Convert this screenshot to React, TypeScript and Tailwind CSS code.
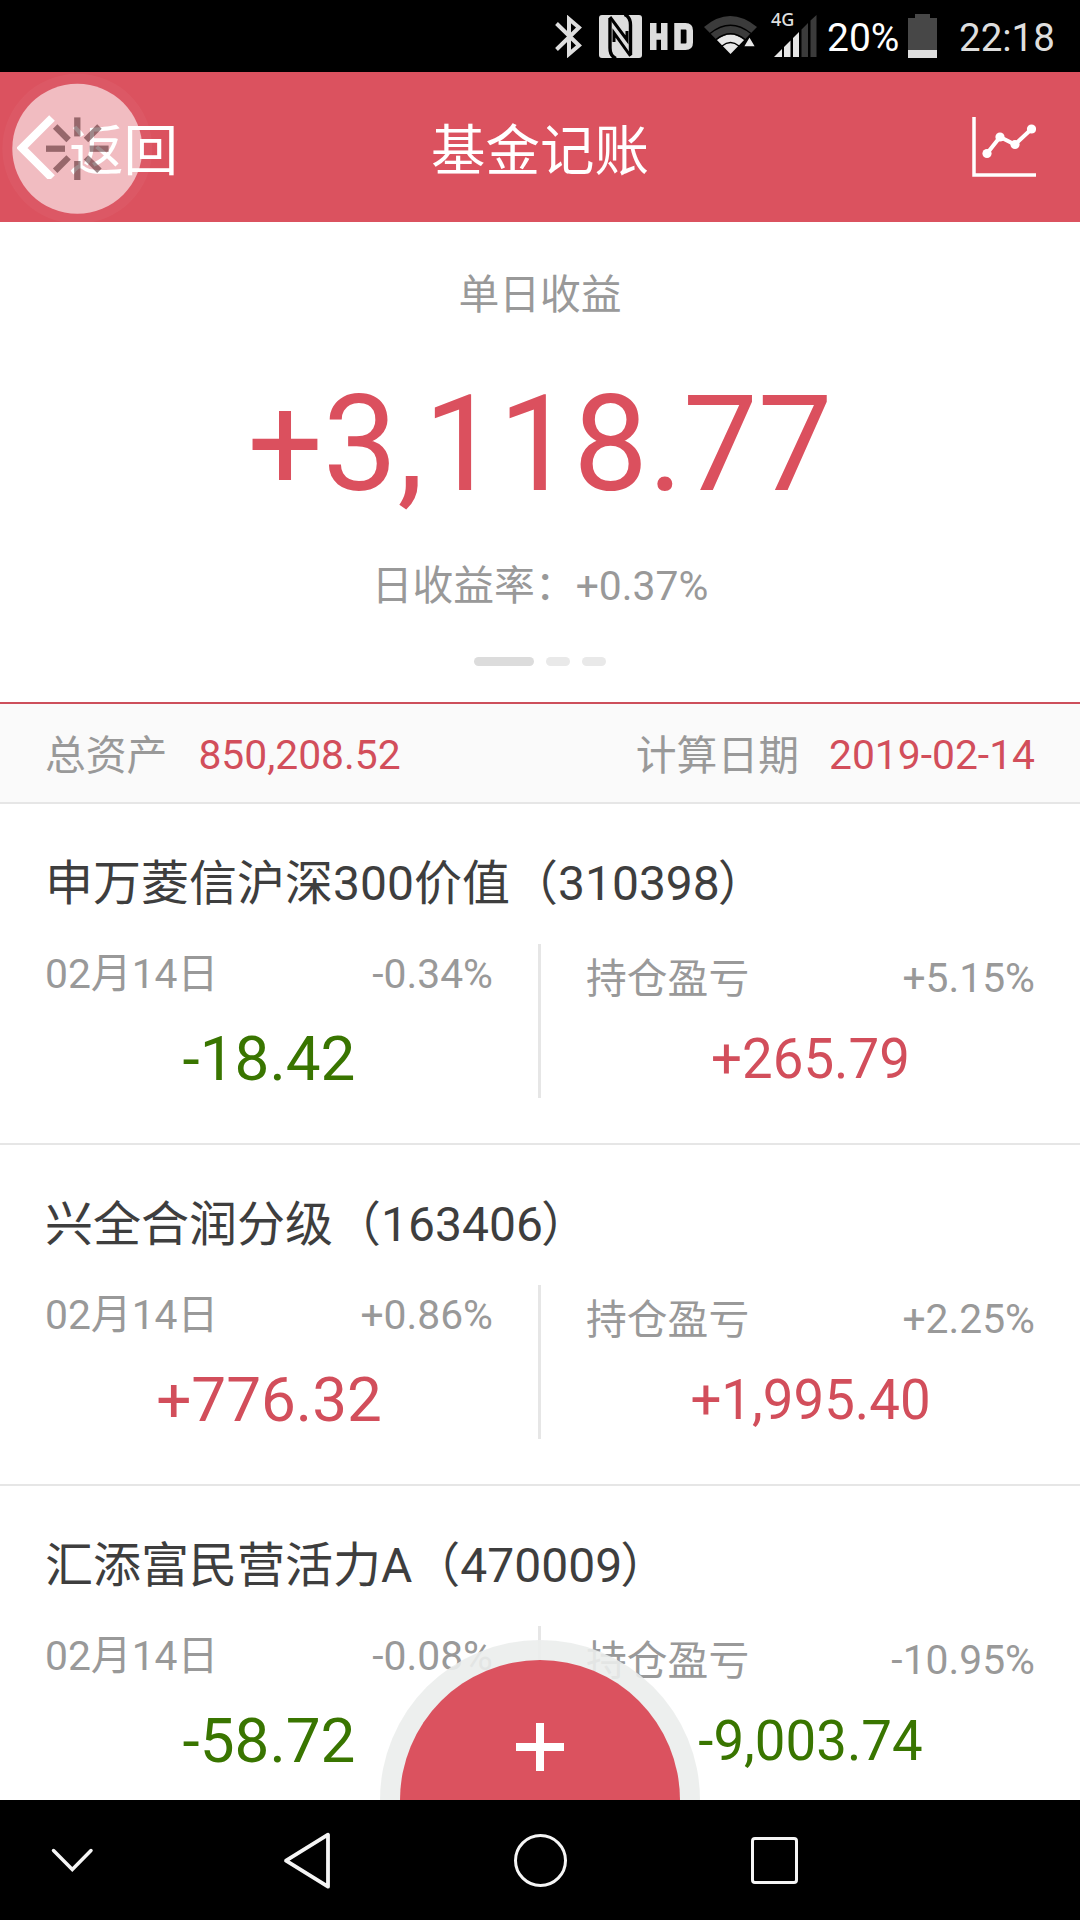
type Tone = "up" | "down";

type Fund = {
  name: string;
  code: string;
  date: string;
  dayRate: string;
  dayProfit: string;
  dayTone: Tone;
  totalRate: string;
  totalProfit: string;
  totalTone: Tone;
};

const funds: Fund[] = [
  {
    name: "申万菱信沪深300价值",
    code: "310398",
    date: "02月14日",
    dayRate: "-0.34%",
    dayProfit: "-18.42",
    dayTone: "down",
    totalRate: "+5.15%",
    totalProfit: "+265.79",
    totalTone: "up",
  },
  {
    name: "兴全合润分级",
    code: "163406",
    date: "02月14日",
    dayRate: "+0.86%",
    dayProfit: "+776.32",
    dayTone: "up",
    totalRate: "+2.25%",
    totalProfit: "+1,995.40",
    totalTone: "up",
  },
  {
    name: "汇添富民营活力A",
    code: "470009",
    date: "02月14日",
    dayRate: "-0.08%",
    dayProfit: "-58.72",
    dayTone: "down",
    totalRate: "-10.95%",
    totalProfit: "-9,003.74",
    totalTone: "down",
  },
];

const toneClass: Record<Tone, string> = {
  up: "text-[#d24e5b]",
  down: "text-[#397500]",
};

function StatusBar() {
  return (
    <div className="flex h-[72px] shrink-0 items-start bg-black pl-[555px] text-[#dedede]">
      <svg className="mt-[15px] h-[43px] w-[27px]" viewBox="0 0 27 43" fill="none" stroke="#dedede" strokeWidth="4">
        <path d="M1.500 8.500 L24 30.500 L14 39 V4 L24 12.500 L1.500 34.500" />
      </svg>
      <svg className="mt-[15px] ml-[17px] h-[43px] w-[43px]" viewBox="0 0 43 43">
        <rect width="43" height="43" rx="3" fill="#dedede" />
        <g fill="none" stroke="#000" strokeWidth="3.400">
          <path d="M11 3 V33 Q11 41 17 43.500" />
          <path d="M31.500 40 V10 Q31.500 2 25.500 -0.500" />
          <path d="M11 2 L28 25 V16" strokeWidth="3" />
          <path d="M31.500 41 L15 18 V27" strokeWidth="3" />
        </g>
      </svg>
      <svg className="mt-[23px] ml-[8px] h-[27px] w-[44px]" viewBox="0 0 44 27" fill="none" stroke="#dedede" strokeWidth="6.500">
        <path d="M3.250 0 V27 M14.250 0 V27 M3.250 13.500 H14.250" />
        <path d="M27.500 3.250 H35.500 Q39.750 3.250 39.750 7.500 V19.500 Q39.750 23.750 35.500 23.750 H27.500 Z" />
      </svg>
      <svg className="mt-[16px] ml-[10px] h-[38px] w-[54px]" viewBox="0 0 54 38">
        <path d="M0 11 Q26 -11 53 11 L26.500 38 Z" fill="#3b3b3b" />
        <path d="M13 24 Q26.500 13 40 24 L26.500 38 Z" fill="#e6e6e6" />
        <path d="M6 17.500 Q26.500 1 47 17.500 M12 23.500 Q26.500 12 41 23.500 M18 30 Q26.500 23 35 30" fill="none" stroke="#000" strokeWidth="1.500" />
        <path d="M45.500 20 L52 31 H39 Z" fill="#e6e6e6" stroke="#000" strokeWidth="1.500" />
      </svg>
      <div className="relative mt-[15px] ml-[16px] h-[43px] w-[43px]">
        <svg className="h-[43px] w-[43px]" viewBox="0 0 43 43">
          <path d="M0 42 L8 34 V42 Z M10 32 L16.500 25.500 V42 H10 Z M19 23 L25 17 V42 H19 Z" fill="#e6e6e6" />
          <path d="M27.500 14.500 L34 8 V42 H27.500 Z M36.500 5.500 L42.500 0 V42 H36.500 Z" fill="#3b3b3b" />
        </svg>
        <span className="absolute top-[-5px] left-[-3px] font-['Noto_Sans'] text-[18px] leading-[18px] font-medium">4G</span>
      </div>
      <span className="ml-[10px] w-[72px] text-[39px] leading-[76px] whitespace-nowrap text-white">20%</span>
      <svg className="mt-[14px] ml-[9px] h-[44px] w-[29px]" viewBox="0 0 29 44">
        <path d="M7 0 H22 V4 H29 V36 H0 V4 H7 Z" fill="#474747" />
        <path d="M0 36 H29 V44 H0 Z" fill="#dedede" />
      </svg>
      <span className="ml-[22px] text-[38.5px] leading-[76px]">22:18</span>
    </div>
  );
}

// floating assistive ball that sits on top of the back button
function FloatingBall() {
  return (
    <svg className="absolute top-0 left-0 h-[156px] w-[160px]" viewBox="0 0 160 156">
      <circle cx="77.300" cy="76.700" r="75" fill="#fff" fillOpacity="0.04" />
      <circle cx="77.300" cy="76.700" r="65" fill="#fff" fillOpacity="0.6" />
      <g stroke="#3e1216" strokeOpacity="0.5" strokeWidth="6.300">
        {[0, 45, 90, 135, 180, 225, 270, 315].map((deg) => (
          <path key={deg} d="M77.300 64.400 V45.400" transform={`rotate(${deg} 77.300 76.700)`} />
        ))}
      </g>
    </svg>
  );
}

function Header() {
  return (
    <header className="relative grid h-[150px] shrink-0 grid-cols-3 items-center bg-[#db525f] text-[54.5px] leading-[60px] text-white">
      <div className="flex items-center pl-[17px]">
        <svg className="h-[64px] w-[38px]" viewBox="0 0 38 64" fill="none" stroke="#fff" strokeWidth="8">
          <path d="M35 3 L5 33 L35 63" />
        </svg>
        <span className="mt-[8px] ml-[14px]">返回</span>
      </div>
      <h1 className="mt-[8px] text-center">基金记账</h1>
      <svg className="mr-[44px] h-[61px] w-[64px] justify-self-end" viewBox="0 0 64 61" fill="none" stroke="#fff" strokeWidth="3.500">
        <path d="M2 0 V58 H64" />
        <path d="M15 36.500 L28 20 L43 27.500 L59.500 12" strokeWidth="4" />
        <g fill="#fff" stroke="none">
          <circle cx="15" cy="36.500" r="4.600" />
          <circle cx="28" cy="20" r="4.600" />
          <circle cx="43" cy="27.500" r="4.600" />
          <circle cx="59.500" cy="12" r="4.600" />
        </g>
      </svg>
      <FloatingBall />
    </header>
  );
}

function Summary() {
  return (
    <section className="flex h-[482px] shrink-0 flex-col items-center border-b-2 border-[#cd4f5b] text-[40.8px] text-[#999]">
      <p className="mt-[43px] leading-[60px]">单日收益</p>
      <p className="mt-[40px] text-[133px] leading-[160px] text-[#db505e]">+3,118.77</p>
      <p className="mt-[31px] leading-[60px]">日收益率：+0.37%</p>
      <div className="mt-[41px] flex gap-3">
        <span className="h-[9px] w-[60px] rounded-full bg-[#dcdcdc]" />
        <span className="h-[9px] w-6 rounded-full bg-[#e9e9e9]" />
        <span className="h-[9px] w-6 rounded-full bg-[#e9e9e9]" />
      </div>
    </section>
  );
}

function AssetBar() {
  return (
    <div className="flex h-[100px] shrink-0 justify-between border-b-2 border-[#e6e6e6] bg-[#fafafa] px-[45px] text-[40.8px] leading-[102px] text-[#999]">
      <p className="flex gap-[31px]">
        <span className="pt-px">总资产</span>
        <span className="text-[#d24e5b]">850,208.52</span>
      </p>
      <p className="flex gap-[30px]">
        <span className="pt-px">计算日期</span>
        <span className="text-[#d24e5b]">2019-02-14</span>
      </p>
    </div>
  );
}

function FundCard({ fund }: { fund: Fund }) {
  return (
    <article className="h-[341px] shrink-0 border-b-2 border-[#e6e6e6] px-[45px] pt-[50px]">
      <h2 className="text-[48px] leading-[60px] text-[#3e3e3e]">
        {fund.name}（{fund.code}
        <span className="-ml-[2px]">）</span>
      </h2>
      <div className="mt-[30px] flex h-[154px]">
        <div className="w-[493px] pr-[45px]">
          <div className="flex justify-between text-[40.8px] leading-[60px] text-[#999]">
            <span>{fund.date}</span>
            <span>{fund.dayRate}</span>
          </div>
          <p className={`mt-[15px] text-center text-[62px] leading-[80px] ${toneClass[fund.dayTone]}`}>
            {fund.dayProfit}
          </p>
        </div>
        <div className="w-[3px] bg-[#e6e6e6]" />
        <div className="flex-1 pt-[4px] pl-[45px]">
          <div className="flex justify-between text-[40.8px] leading-[60px] text-[#999]">
            <span className="pt-px">持仓盈亏</span>
            <span>{fund.totalRate}</span>
          </div>
          <p className={`mt-[10px] text-center text-[54.6px] leading-[80px] ${toneClass[fund.totalTone]}`}>
            {fund.totalProfit}
          </p>
        </div>
      </div>
    </article>
  );
}

function AddButton() {
  return (
    <button className="absolute bottom-0 left-[380px] h-[160px] w-[320px] rounded-t-full bg-[#ebedec]/90 px-5 pt-5">
      <span className="flex h-[140px] w-[280px] justify-center rounded-t-full bg-[#db525f] pt-[63px]">
        <svg className="h-[48px] w-[48px]" viewBox="0 0 48 48" stroke="#fff" strokeWidth="8">
          <path d="M24 0 V48 M0 24 H48" />
        </svg>
      </span>
    </button>
  );
}

function NavBar() {
  return (
    <nav className="flex h-[120px] shrink-0 items-center bg-black">
      <div className="mr-[46px] flex w-[144px] justify-center">
        <svg className="h-[60px] w-[60px]" viewBox="0 0 60 60" fill="none" stroke="#f5f5f5" strokeWidth="3.500" strokeLinecap="round">
          <path d="M11.500 20.500 L30.300 39.500 L49 20.500" />
        </svg>
      </div>
      <div className="flex w-[234px] justify-center">
        <svg className="h-[60px] w-[60px]" viewBox="0 0 60 60" fill="none" stroke="#f5f5f5" strokeWidth="3.800" strokeLinejoin="round">
          <path d="M9 30.700 L51 4.700 V56.700 Z" />
        </svg>
      </div>
      <div className="flex w-[233px] justify-center">
        <span className="h-[53px] w-[53px] rounded-full border-[3.5px] border-[#f5f5f5]" />
      </div>
      <div className="flex w-[234px] justify-center">
        <span className="mt-[1px] h-[47px] w-[47px] rounded-[4px] border-[3.5px] border-[#f5f5f5]" />
      </div>
    </nav>
  );
}

export default function App() {
  return (
    <main className="flex h-[1920px] w-[1080px] flex-col overflow-hidden bg-white font-[Roboto,'Noto_Sans_CJK_SC',sans-serif]">
      <StatusBar />
      <div className="relative flex h-[1728px] shrink-0 flex-col overflow-hidden">
        <Header />
        <Summary />
        <AssetBar />
        {funds.map((fund) => (
          <FundCard key={fund.code} fund={fund} />
        ))}
        <AddButton />
      </div>
      <NavBar />
    </main>
  );
}
